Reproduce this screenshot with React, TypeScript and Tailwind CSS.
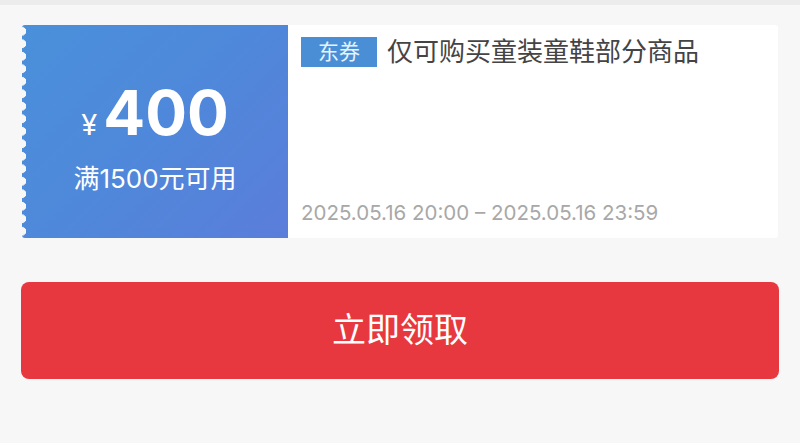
export default function App() {
  return (
    <div
      className="flex h-[443px] w-[800px] flex-col bg-[#f7f7f7]"
      style={{ fontFamily: '"Liberation Sans", "Noto Sans CJK SC", sans-serif' }}
    >
      <div className="h-[5px] bg-[#ececec]" />

      <div className="mx-[22px] mt-[20px] flex h-[213px] overflow-hidden rounded-[3px]">
        <div className="relative flex w-[266px] flex-col items-center bg-[linear-gradient(135deg,#4a90da_0%,#4f88da_50%,#5b7ddb_100%)] text-white">
          <div className="absolute inset-y-0 left-0 w-[5px] bg-[radial-gradient(circle_at_0_50%,#f7f7f7_4px,transparent_4.5px)] bg-[length:5px_12.5px]" />
          <div className="mt-[57px] flex items-baseline font-['Inter','Noto_Sans_CJK_SC',sans-serif]">
            <span className="mr-[6px] text-[29px] leading-none">¥</span>
            <span className="text-[62px] font-bold leading-none">400</span>
          </div>
          <div className="mt-[22px] text-[26px] leading-none">
            满<span className="font-['Inter',sans-serif]">1500</span>元可用
          </div>
        </div>

        <div className="flex flex-1 flex-col bg-white pl-[13px]">
          <div className="mt-[12px] flex items-center">
            <span className="flex h-[30px] w-[76px] items-center justify-center bg-[#4a8fd6] text-[21px] text-[#e4f4ff]">
              东券
            </span>
            <span className="ml-[10px] text-[26px] leading-none text-[#444]">仅可购买童装童鞋部分商品</span>
          </div>
          <div className="mt-auto mb-[15px] font-['Inter',sans-serif] text-[20.5px] leading-none text-[#a8a8a8]">
            2025.05.16 20:00 – 2025.05.16 23:59
          </div>
        </div>
      </div>

      <button className="mx-[21px] mt-[44px] flex h-[97px] items-center justify-center rounded-[8px] bg-[#e8383f] text-[34px] text-white">
        立即领取
      </button>
    </div>
  );
}
